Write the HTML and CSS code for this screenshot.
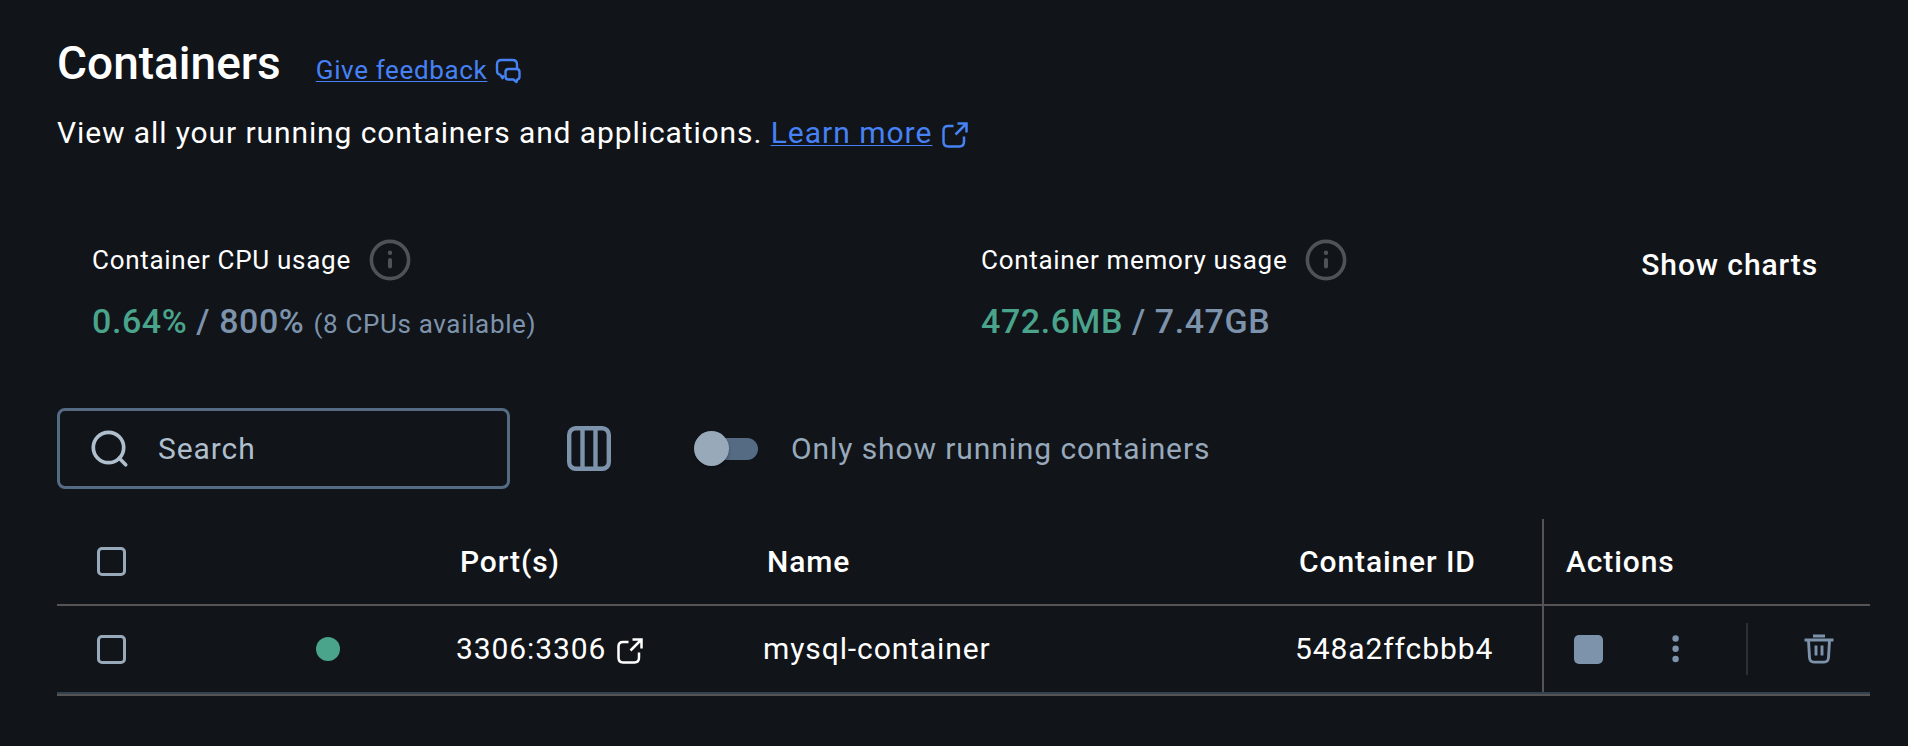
FILE: index.html
```html
<!DOCTYPE html>
<html lang="en">
<head>
<meta charset="utf-8">
<title>Containers</title>
<link rel="stylesheet" href="styles.css">
</head>
<body>
<main class="page">
  <header class="heading">
    <h1 class="title">Containers</h1>
    <a class="feedback" href="#"><span class="link-text">Give feedback</span>
      <svg class="icon-chat" width="26" height="26" viewBox="0 0 26 26" fill="none" stroke="currentColor" stroke-width="2.400" stroke-linejoin="round"><path d="M9 17.200 7.500 20.200 5.200 16.600C2.800 16.300 2 15 2 12.500V6.500C2 3.500 3.500 2 6.500 2H17.500C20.500 2 22 3.500 22 6.500V11"/><path d="M13.500 11H21.500C23.500 11 24.500 12 24.500 14V18.500C24.500 20.500 23.800 21.300 22.300 21.500L21.500 24 18.500 21.500H13.500C11.500 21.500 10.500 20.500 10.500 18.500V14C10.500 12 11.500 11 13.500 11Z"/></svg>
    </a>
  </header>
  <p class="intro">View all your running containers and applications. <a class="learn" href="#"><span class="link-text">Learn more</span><svg class="icon-ext" width="26" height="26" viewBox="0 0 26 26" fill="none" stroke="currentColor" stroke-width="2.500"><path d="M11.500 4H6C3 4 1.500 5.500 1.500 8.500V19.500C1.500 22.500 3 24.500 6 24.500H17.500C20.500 24.500 22 22.500 22 19.500V14.500"/><path d="M15.500 1.500H24.500V10.500M24 2 13.500 12.500"/></svg></a></p>

  <section class="stats">
    <div class="stat stat-cpu">
      <div class="stat-label">Container CPU usage
        <svg class="icon-info" width="42" height="42" viewBox="0 0 42 42" fill="none" stroke="currentColor" stroke-linecap="round"><circle cx="21" cy="21" r="18.600" stroke-width="3.600"/><path d="M21 21V27.500" stroke-width="4"/><circle cx="21" cy="13.800" r="2.200" fill="currentColor" stroke="none"/></svg>
      </div>
      <div class="stat-value"><span class="used">0.64%</span> / 800% <span class="note">(8 CPUs available)</span></div>
    </div>
    <div class="stat stat-memory">
      <div class="stat-label">Container memory usage
        <svg class="icon-info" width="42" height="42" viewBox="0 0 42 42" fill="none" stroke="currentColor" stroke-linecap="round"><circle cx="21" cy="21" r="18.600" stroke-width="3.600"/><path d="M21 21V27.500" stroke-width="4"/><circle cx="21" cy="13.800" r="2.200" fill="currentColor" stroke="none"/></svg>
      </div>
      <div class="stat-value"><span class="used">472.6MB</span> / 7.47GB</div>
    </div>
    <button class="show-charts">Show charts</button>
  </section>

  <section class="toolbar">
    <div class="search">
      <svg width="40" height="40" viewBox="0 0 40 40" fill="none" stroke="currentColor" stroke-width="3.700" stroke-linecap="round"><circle cx="18.500" cy="18.500" r="15.200"/><path d="M29.300 29.300 35.700 35.700"/></svg>
      <span>Search</span>
    </div>
    <svg class="icon-columns" width="44" height="45" viewBox="0 0 44 45" fill="none" stroke="currentColor" stroke-width="4.400"><rect x="2.200" y="2.200" width="39.600" height="40.600" rx="6.500"/><path d="M15.500 2V43M28.500 2V43"/></svg>
    <div class="toggle"><span class="thumb"></span></div>
    <span class="toggle-label">Only show running containers</span>
  </section>

  <section class="table">
    <div class="row head">
      <div class="cell select"><span class="checkbox"></span></div>
      <div class="cell"></div>
      <div class="cell">Port(s)</div>
      <div class="cell">Name</div>
      <div class="cell">Container ID</div>
      <div class="cell actions">Actions</div>
    </div>
    <div class="row item">
      <div class="cell select"><span class="checkbox"></span></div>
      <div class="cell"><span class="status"></span></div>
      <div class="cell port"><span>3306:3306</span>
        <svg width="26" height="26" viewBox="0 0 26 26" fill="none" stroke="currentColor" stroke-width="2.500"><path d="M11.500 4H6C3 4 1.500 5.500 1.500 8.500V19.500C1.500 22.500 3 24.500 6 24.500H17.500C20.500 24.500 22 22.500 22 19.500V14.500"/><path d="M15.500 1.500H24.500V10.500M24 2 13.500 12.500"/></svg>
      </div>
      <div class="cell">mysql-container</div>
      <div class="cell">548a2ffcbbb4</div>
      <div class="cell actions">
        <span class="stop"></span>
        <svg class="more" width="8" height="30" viewBox="0 0 8 30" fill="currentColor"><circle cx="3.600" cy="4.500" r="3.200"/><circle cx="3.600" cy="14.700" r="3.200"/><circle cx="3.600" cy="25" r="3.200"/></svg>
        <span class="divider"></span>
        <svg class="trash" width="30" height="30" viewBox="0 0 30 30" fill="none" stroke="currentColor" stroke-width="2.900"><path d="M9 2H21M0.500 6H29.500"/><path d="M4.500 6.500 5.500 23.500C5.800 27 7 28.100 10 28.100H20C23 28.100 24.200 27 24.500 23.500L25.500 6.500"/><path d="M12 11.500V21.500M18 11.500V21.500"/></svg>
      </div>
    </div>
  </section>
</main>
</body>
</html>
```
FILE: styles.css
```css
* {
  box-sizing: border-box;
}

body {
  margin: 0;
  background: #111419;
  color: #fff;
  font-family: Roboto, sans-serif;
  font-size: 30px;
  letter-spacing: 0.9px;
  line-height: 40px;
}

svg {
  display: block;
  flex: none;
}

.page {
  height: 746px;
  padding: 36px 38px 0 57px;
  overflow: hidden;
}

.heading {
  display: flex;
  align-items: baseline;
  height: 54px;
}

.title {
  margin: 0;
  font-size: 46px;
  font-weight: 500;
  letter-spacing: 0;
  line-height: 54px;
}

.feedback,
.learn {
  color: #4682f5;
  text-decoration: none;
}

.feedback {
  display: flex;
  margin-left: 35px;
  font-size: 26px;
  letter-spacing: 0.65px;
}

.icon-chat {
  margin: 8px 0 0 8px;
}

.link-text {
  text-decoration: underline;
  text-decoration-thickness: 1px;
  text-underline-offset: 2px;
  text-decoration-skip-ink: none;
}

.intro {
  margin: 23px 0 0;
  height: 40px;
}

.learn {
  letter-spacing: 1px;
}

.icon-ext {
  display: inline-block;
  margin-left: 10px;
  vertical-align: -5px;
}

.stats {
  display: flex;
  height: 101px;
  margin: 87px 53px 0 35px;
}

.stat-cpu {
  width: 889px;
}

.stat-label {
  display: flex;
  align-items: center;
  gap: 18px;
  height: 40px;
  font-size: 26px;
  letter-spacing: 0.71px;
}

.icon-info {
  color: #4f5358;
}

.stat-value {
  margin-top: 21px;
  color: #7d93ac;
  font-size: 34px;
  font-weight: 500;
  letter-spacing: 0.57px;
}

.used {
  color: #4aa38b;
}

.note {
  font-size: 26px;
  font-weight: 400;
  letter-spacing: 0.65px;
}

.show-charts {
  align-self: flex-start;
  margin: 5px -1px 0 auto;
  padding: 0;
  border: 0;
  background: none;
  color: inherit;
  font: inherit;
  font-weight: 500;
  letter-spacing: inherit;
}

.toolbar {
  display: flex;
  align-items: center;
  height: 81px;
  margin-top: 67px;
}

.search {
  display: flex;
  align-items: center;
  gap: 28px;
  width: 453px;
  height: 81px;
  padding-left: 30px;
  border: 3px solid #556b84;
  border-radius: 8px;
  color: #afbfcd;
}

.icon-columns {
  margin-left: 57px;
  color: #7d93ac;
}

.toggle {
  width: 62px;
  height: 22px;
  margin-left: 85px;
  border-radius: 11px;
  background: #556b84;
}

.thumb {
  display: block;
  width: 35px;
  height: 35px;
  margin: -7px 0 0 -2px;
  border-radius: 50%;
  background: #98a9b9;
  box-shadow: 0 2px 3px rgba(0, 0, 0, 0.3);
}

.toggle-label {
  margin-left: 33px;
  color: #97a9bb;
}

.table {
  margin-top: 30px;
  border-bottom: 2px solid #565355;
}

.row {
  display: grid;
  grid-template-columns: 259px 140px 307px 532px 247px 328px;
}

.head {
  height: 87px;
  border-bottom: 2px solid #565355;
  font-weight: 500;
}

.item {
  height: 88px;
  border-bottom: 2px solid #33424f;
}

.cell {
  display: flex;
  align-items: center;
}

.head .cell {
  padding-left: 4px;
}

.row .cell.select {
  padding-left: 40px;
}

.checkbox {
  width: 29px;
  height: 29px;
  border: 3px solid #98a9b9;
  border-radius: 5px;
}

.item .checkbox {
  margin-top: 1px;
}

.status {
  width: 24px;
  height: 24px;
  border-radius: 50%;
  background: #4aa38b;
}

.port svg {
  margin: 4px 0 0 11px;
}

.actions {
  border-left: 2px solid #565355;
}

.head .actions {
  margin-bottom: -2px;
  padding: 0 0 2px 22px;
}

.item .actions {
  padding-left: 30px;
  color: #7d93ac;
}

.stop {
  width: 29px;
  height: 29px;
  margin-top: 1px;
  border-radius: 5px;
  background: #7d93ac;
}

.more {
  margin-left: 69px;
}

.divider {
  width: 2px;
  height: 52px;
  margin-left: 66px;
  background: #2c2f34;
}

.trash {
  margin-left: 56px;
}
```
